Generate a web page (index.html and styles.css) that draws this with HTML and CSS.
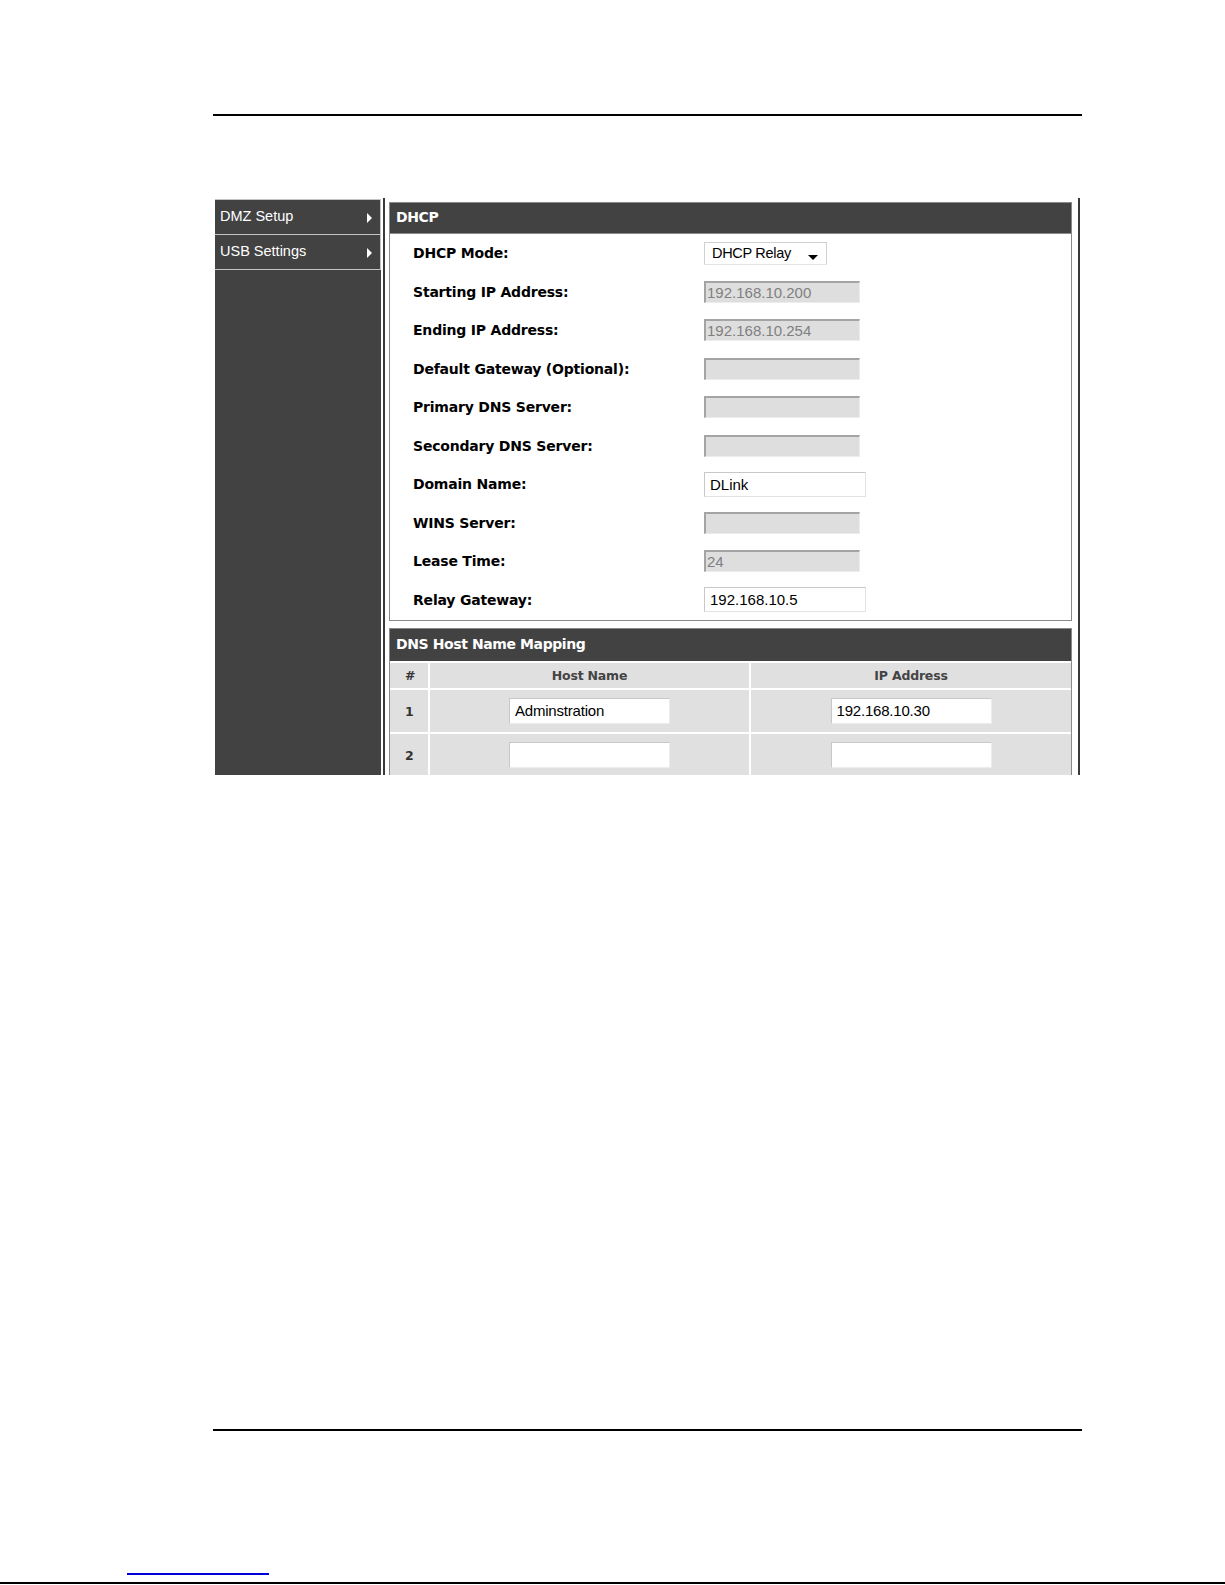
FILE: index.html
```html
<!DOCTYPE html>
<html>
<head>
<meta charset="utf-8">
<link rel="stylesheet" href="styles.css">
</head>
<body>
<div class="page">
  <div class="rule top-rule"></div>
  <div class="shot">
    <div class="sidebar">
      <div class="menu-item">DMZ Setup<span class="tri"></span></div>
      <div class="menu-item">USB Settings<span class="tri"></span></div>
    </div>
    <div class="vline"></div>
    <div class="content">
      <div class="sect-head">DHCP</div>
      <div class="sect-body">
        <div class="row"><div class="lbl">DHCP Mode:</div><div class="val"><div class="select">DHCP Relay<span class="caret"></span></div></div></div>
        <div class="row"><div class="lbl">Starting IP Address:</div><div class="val"><div class="inp dis">192.168.10.200</div></div></div>
        <div class="row"><div class="lbl">Ending IP Address:</div><div class="val"><div class="inp dis">192.168.10.254</div></div></div>
        <div class="row"><div class="lbl">Default Gateway (Optional):</div><div class="val"><div class="inp dis"></div></div></div>
        <div class="row"><div class="lbl">Primary DNS Server:</div><div class="val"><div class="inp dis"></div></div></div>
        <div class="row"><div class="lbl">Secondary DNS Server:</div><div class="val"><div class="inp dis"></div></div></div>
        <div class="row"><div class="lbl">Domain Name:</div><div class="val"><div class="inp en">DLink</div></div></div>
        <div class="row"><div class="lbl">WINS Server:</div><div class="val"><div class="inp dis"></div></div></div>
        <div class="row"><div class="lbl">Lease Time:</div><div class="val"><div class="inp dis">24</div></div></div>
        <div class="row"><div class="lbl">Relay Gateway:</div><div class="val"><div class="inp en">192.168.10.5</div></div></div>
      </div>
      <div class="sect-head dns-head">DNS Host Name Mapping</div>
      <div class="tbl">
        <div class="cell th c-num">#</div>
        <div class="cell th">Host Name</div>
        <div class="cell th">IP Address</div>
        <div class="cell td c-num">1</div>
        <div class="cell td"><div class="tinp">Adminstration</div></div>
        <div class="cell td"><div class="tinp">192.168.10.30</div></div>
        <div class="cell td c-num">2</div>
        <div class="cell td"><div class="tinp"></div></div>
        <div class="cell td"><div class="tinp"></div></div>
      </div>
    </div>
    <div class="vline right"></div>
  </div>
  <div class="rule bottom-rule"></div>
  <div class="link-line"></div>
  <div class="foot-rule"></div>
</div>
</body>
</html>
```
FILE: styles.css
```css
html, body {
  margin: 0;
  padding: 0;
  background: #ffffff;
}
.page {
  width: 1225px;
  height: 1585px;
  overflow: hidden;
  font-family: "Liberation Sans", Arial, sans-serif;
}
.rule {
  margin-left: 213px;
  width: 869px;
  height: 2px;
  background: #000;
}
.top-rule {
  margin-top: 114px;
}
.shot {
  margin-top: 82px;
  margin-left: 215px;
  width: 865px;
  height: 577px;
  overflow: hidden;
  display: flex;
  align-items: flex-start;
}
.sidebar {
  width: 166px;
  height: 576px;
  margin-top: 1px;
  background: #424242;
  flex: none;
}
.menu-item {
  height: 36px;
  box-sizing: border-box;
  border: 1px solid #c4c4c4;
  border-left: none;
  margin-bottom: -1px;
  color: #fff;
  font-size: 14.5px;
  line-height: 33px;
  padding-left: 5px;
  position: relative;
}
.tri {
  position: absolute;
  right: 8px;
  top: 13px;
  width: 0;
  height: 0;
  border-left: 5px solid #fff;
  border-top: 5px solid transparent;
  border-bottom: 5px solid transparent;
}
.vline {
  width: 2px;
  height: 577px;
  background: #3a3a3a;
  margin-left: 2px;
  flex: none;
}
.vline.right {
  margin-left: 6px;
}
.content {
  margin-left: 4px;
  width: 683px;
  flex: none;
  padding-top: 4px;
}
.sect-head {
  height: 31px;
  box-sizing: border-box;
  background: #424242;
  border: 1px solid #8a8a8a;
  border-bottom: none;
  color: #fff;
  font-family: "DejaVu Sans", Verdana, sans-serif;
  font-weight: bold;
  font-size: 14px;
  letter-spacing: -0.4px;
  line-height: 29px;
  padding-left: 6px;
}
.sect-body {
  border: 1px solid #8a8a8a;
  background: #fff;
  padding-bottom: 1px;
}
.row {
  height: 38.5px;
  display: flex;
  align-items: center;
}
.lbl {
  width: 314px;
  box-sizing: border-box;
  padding-left: 23px;
  flex: none;
  font-family: "DejaVu Sans", Verdana, sans-serif;
  font-weight: bold;
  font-size: 14px;
  letter-spacing: -0.2px;
  color: #000;
}
.val {
  flex: 1;
}
.inp {
  box-sizing: border-box;
  font-size: 15px;
  color: #000;
}
.inp.dis {
  width: 156px;
  height: 22px;
  line-height: 20px;
  background: #dedede;
  border-top: 2px solid #a4a4a4;
  border-left: 2px solid #a4a4a4;
  border-right: 1px solid #ececec;
  border-bottom: 1px solid #ececec;
  color: #808080;
  padding-left: 1px;
}
.inp.en {
  width: 162px;
  height: 25px;
  line-height: 23px;
  background: #fff;
  border: 1px solid #c8c8c8;
  border-bottom-color: #e2e2e2;
  border-right-color: #e2e2e2;
  padding-left: 5px;
}
.select {
  width: 123px;
  height: 23px;
  box-sizing: border-box;
  border: 1px solid #d0d0d0;
  border-bottom-color: #e4e4e4;
  background: #fff;
  font-size: 14.5px;
  line-height: 21px;
  padding-left: 7px;
  position: relative;
  letter-spacing: -0.3px;
}
.caret {
  position: absolute;
  right: 8px;
  top: 12px;
  width: 0;
  height: 0;
  border-top: 5px solid #000;
  border-left: 5px solid transparent;
  border-right: 5px solid transparent;
}
.dns-head {
  margin-top: 7px;
  height: 33px;
  line-height: 31px;
}
.tbl {
  display: grid;
  grid-template-columns: 38px 319px 320px;
  grid-template-rows: 25px 42px 42px;
  column-gap: 2px;
  row-gap: 2px;
  padding-top: 2px;
  border-left: 1px solid #8a8a8a;
  border-right: 1px solid #8a8a8a;
  background: #fff;
}
.cell {
  background: #e0e0e0;
  display: flex;
  align-items: center;
  justify-content: center;
  font-family: "DejaVu Sans", Verdana, sans-serif;
  font-weight: bold;
  font-size: 12.5px;
  letter-spacing: -0.2px;
  color: #444;
}
.cell.c-num {
  justify-content: flex-start;
  padding-left: 15px;
  color: #333;
}
.tinp {
  width: 161px;
  height: 26px;
  box-sizing: border-box;
  background: #fff;
  border: 1px solid #c8c8c8;
  border-bottom-color: #ececec;
  border-right-color: #ececec;
  font-family: "Liberation Sans", Arial, sans-serif;
  font-weight: normal;
  font-size: 15px;
  letter-spacing: -0.2px;
  color: #000;
  line-height: 24px;
  padding-left: 5px;
}
.bottom-rule {
  margin-top: 654px;
}
.link-line {
  margin-top: 142px;
  margin-left: 127px;
  width: 142px;
  height: 2px;
  background: #0000dd;
}
.foot-rule {
  margin-top: 7px;
  width: 1225px;
  height: 2px;
  background: #000;
}
```
